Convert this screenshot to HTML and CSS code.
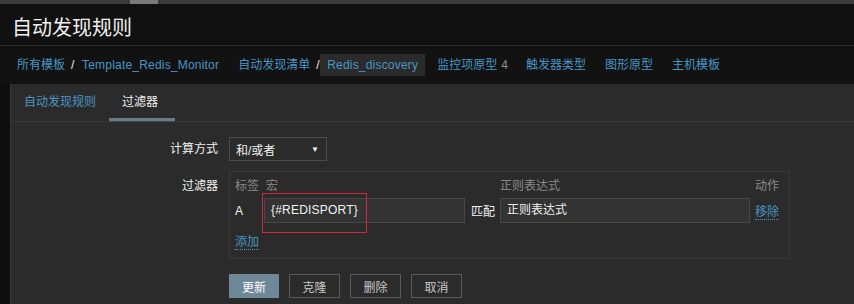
FILE: index.html
```html
<!DOCTYPE html>
<html lang="zh-CN">
<head>
<meta charset="utf-8">
<title>自动发现规则</title>
<link rel="stylesheet" href="styles.css">
</head>
<body>
<div class="topbar"><div class="thumb"></div></div>
<header class="page-header"><h1>自动发现规则</h1></header>
<nav class="breadcrumbs">
  <div class="group"><a class="bc first">所有模板</a><span class="sep">/</span><a class="bc latin">Template_Redis_Monitor</a></div>
  <div class="group"><a class="bc first">自动发现清单</a><span class="sep">/</span><span class="bc selected latin">Redis_discovery</span></div>
  <div class="group"><a class="bc first">监控项原型</a><span class="count">4</span></div>
  <div class="group"><a class="bc">触发器类型</a></div>
  <div class="group"><a class="bc">图形原型</a></div>
  <div class="group"><a class="bc">主机模板</a></div>
</nav>
<main class="content">
  <ul class="tabs">
    <li class="tab"><a>自动发现规则</a></li>
    <li class="tab active"><span>过滤器</span></li>
  </ul>
  <form class="form">
    <label class="label label-calc">计算方式</label>
    <div class="field">
      <div class="select"><span>和/或者</span><span class="arrow">▼</span></div>
    </div>
    <label class="label label-filter">过滤器</label>
    <div class="field">
      <div class="filter-box">
        <div class="filter-grid">
          <div class="th">标签</div>
          <div class="th th-macro">宏</div>
          <div class="th"></div>
          <div class="th">正则表达式</div>
          <div class="th th-action">动作</div>
          <div class="td td-label">A</div>
          <div class="td"><div class="input latin">{#REDISPORT}</div></div>
          <div class="td td-match">匹配</div>
          <div class="td"><div class="input">正则表达式</div></div>
          <div class="td td-action"><a class="link">移除</a></div>
        </div>
        <div class="add-row"><a class="link">添加</a></div>
        <div class="highlight"></div>
      </div>
    </div>
    <div class="buttons">
      <button type="button" class="btn primary">更新</button>
      <button type="button" class="btn">克隆</button>
      <button type="button" class="btn">删除</button>
      <button type="button" class="btn">取消</button>
    </div>
  </form>
</main>
</body>
</html>
```
FILE: styles.css
```css
html, body {
  margin: 0;
  padding: 0;
}
body {
  width: 854px;
  height: 304px;
  overflow: hidden;
  background: #0e0e0e;
  color: #f2f2f2;
  font-family: "Liberation Sans", "Noto Sans CJK SC", sans-serif;
  font-size: 12px;
}
a { color: #4796c4; text-decoration: none; }
.latin { letter-spacing: 0.2px; }

.topbar {
  height: 4px;
  background: #3a3a3a;
}
.topbar .thumb {
  margin-left: 130px;
  width: 28px;
  height: 4px;
  background: #7a7a7a;
}

.page-header {
  background: #111111;
  border-bottom: 1px solid #2a2a2a;
  padding-left: 12px;
  box-sizing: border-box;
  height: 42px;
}
.page-header h1 {
  margin: 0;
  padding-top: 12px;
  font-size: 20px;
  font-weight: normal;
  line-height: 24px;
  color: #f0f0f0;
}

.breadcrumbs {
  height: 38px;
  background: #121212;
  display: flex;
  align-items: center;
  gap: 5px;
  padding-left: 10px;
}
.group {
  display: flex;
  align-items: center;
}
.bc {
  padding: 0 7px;
  line-height: 22px;
  color: #4796c4;
}
.bc.first { padding-right: 0; }
.sep {
  color: #f0f0f0;
  padding: 0 0 0 6px;
  width: 4px;
}
.bc.selected {
  background: #2b2b2b;
  color: #4796c4;
}
.count {
  color: #8c8c8c;
  margin-left: 4px;
  margin-right: 6px;
}

.content {
  margin-left: 10px;
  background: #2b2b2b;
  border-left: 1px solid #383838;
  height: 220px;
}

.tabs {
  list-style: none;
  margin: 0;
  padding: 0;
  display: flex;
  height: 37px;
  border-bottom: 1px solid #383838;
}
.tab {
  padding: 0 13px;
  line-height: 37px;
  position: relative;
}
.tab a { color: #4796c4; }
.tab.active { color: #f2f2f2; padding-right: 17px; }
.tab.active::after {
  content: "";
  position: absolute;
  left: 0;
  right: 0;
  bottom: -1px;
  height: 4px;
  background: #687b87;
  border-bottom: 1px solid #3d4850;
  box-sizing: border-box;
}

.form {
  display: grid;
  grid-template-columns: 207px 561px;
  column-gap: 11px;
  row-gap: 10px;
  padding-top: 15px;
}
.label {
  text-align: right;
  color: #f2f2f2;
}
.label-calc { line-height: 24px; }
.label-filter { padding-top: 7px; line-height: 16px; }

.select {
  width: 98px;
  height: 24px;
  box-sizing: border-box;
  border: 1px solid #4a4a4a;
  background: #2b2b2b;
  display: flex;
  align-items: center;
  justify-content: space-between;
  padding: 0 7px 0 6px;
  color: #f2f2f2;
}
.select .arrow {
  font-size: 8px;
  color: #f2f2f2;
}

.filter-box {
  position: relative;
  width: 561px;
  height: 88px;
  box-sizing: border-box;
  border: 1px solid #383838;
  padding: 5px 0 0 5px;
}
.filter-grid {
  display: grid;
  grid-template-columns: 29px 201px 35px 250px auto;
  grid-template-rows: 18px 25px;
  row-gap: 3px;
  align-items: center;
}
.th {
  color: #8a8a8a;
  line-height: 18px;
}
.th-macro { padding-left: 2px; }
.th-action, .td-action { padding-left: 5px; }
.td-label { color: #f2f2f2; }
.td-match { padding-left: 6px; color: #f2f2f2; }
.input {
  height: 25px;
  box-sizing: border-box;
  background: #333333;
  border: 1px solid #474747;
  padding: 0 6px;
  line-height: 23px;
  color: #f2f2f2;
}
.link {
  color: #4796c4;
  border-bottom: 1px dotted #4796c4;
}
.add-row {
  margin-top: 11px;
  line-height: 16px;
}
.highlight {
  position: absolute;
  left: 32px;
  top: 21px;
  width: 105px;
  height: 40px;
  box-sizing: border-box;
  border: 1px solid #d0283a;
}

.buttons {
  grid-column: 2;
  display: flex;
  gap: 10px;
  margin-top: 5px;
}
.btn {
  width: 51px;
  height: 24px;
  box-sizing: border-box;
  border: 1px solid #5a5a5a;
  background: #2b2b2b;
  color: #c8c8c8;
  font-family: "Liberation Sans", "Noto Sans CJK SC", sans-serif;
  font-size: 12px;
  padding: 0;
}
.btn.primary {
  background: #6f8898;
  border-color: #6f8898;
  color: #ffffff;
  width: 50px;
}
```
